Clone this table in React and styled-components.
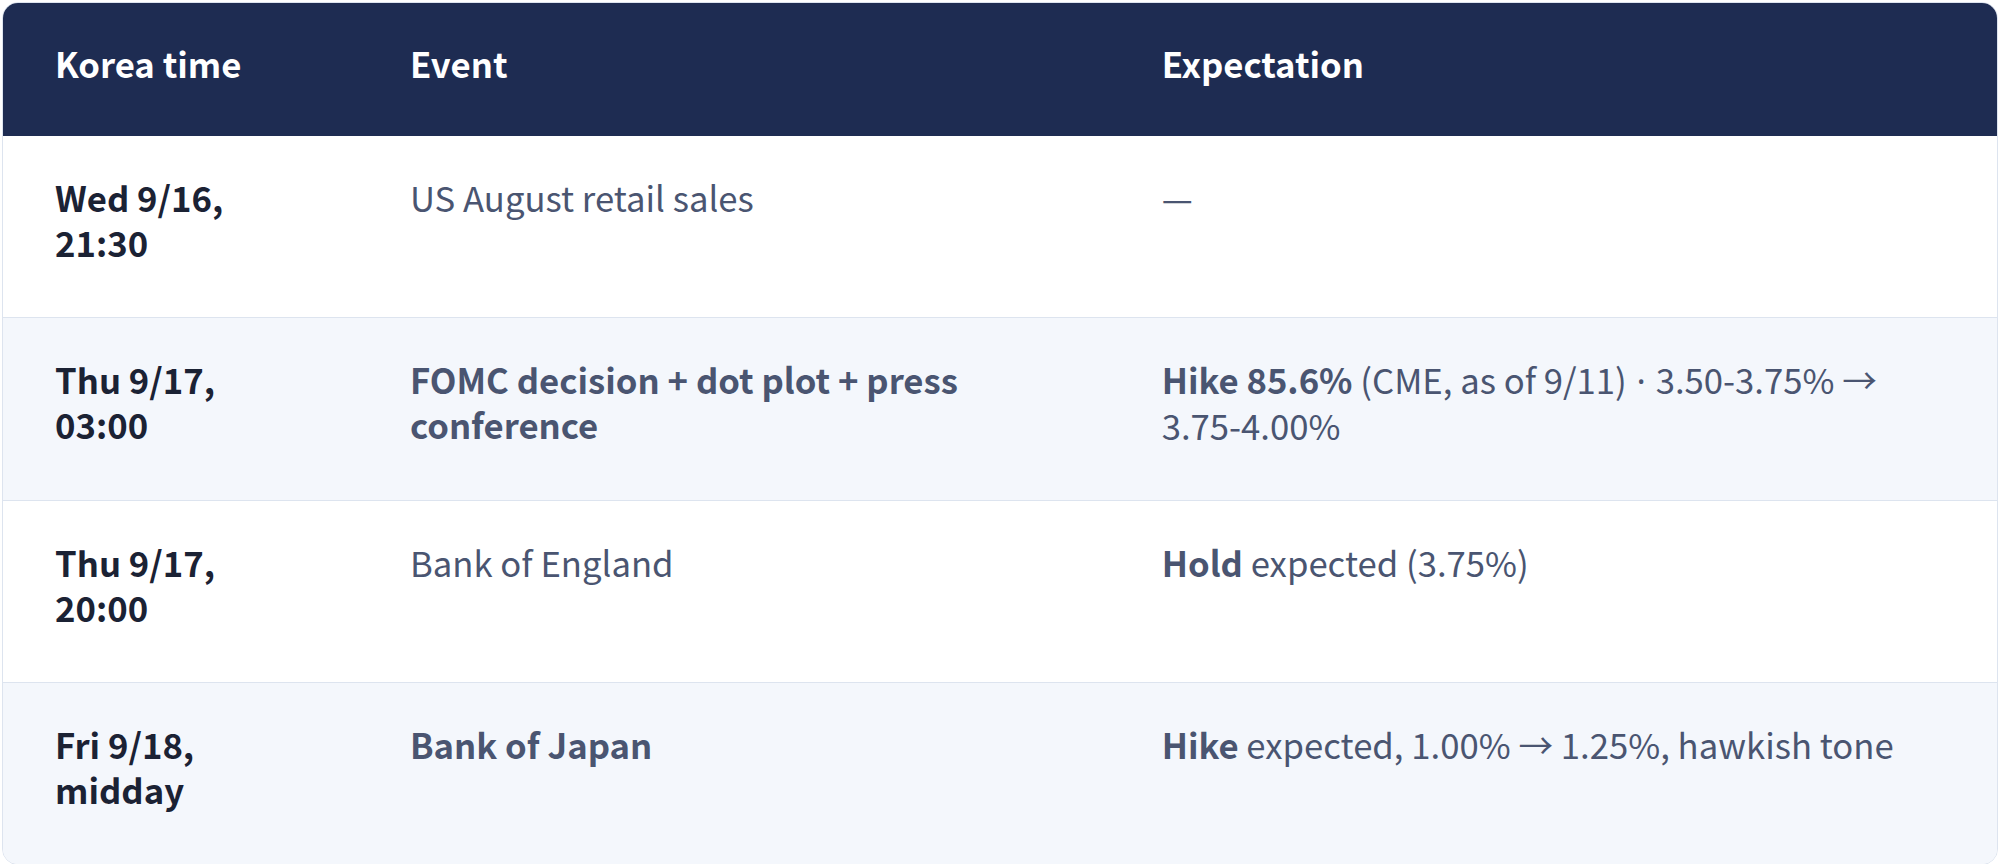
import React from 'react';
import styled, { createGlobalStyle } from 'styled-components';

const GlobalStyle = createGlobalStyle`
  html, body {
    margin: 0;
    padding: 0;
    background: #ffffff;
  }
  body {
    font-family: "Noto Sans CJK KR", "Noto Sans", sans-serif;
  }
`;

const Page = styled.div`
  padding: 2px;
`;

const TableWrap = styled.div`
  border: 1px solid #dde4ef;
  border-radius: 16px;
  overflow: hidden;
`;

const Table = styled.table`
  width: 100%;
  border-collapse: collapse;
  table-layout: fixed;
  font-size: 34.7px;
  line-height: 45px;
`;

const HeadRow = styled.tr`
  background: #1e2c52;
`;

const HeadCell = styled.th`
  box-sizing: border-box;
  text-align: left;
  color: #ffffff;
  font-weight: 700;
  padding: 38px 54px 50px 52px;
  width: ${props => props.$w || 'auto'};
`;

const Row = styled.tr`
  background: ${props => (props.$alt ? '#f4f7fc' : '#ffffff')};

  & + & {
    border-top: 1px solid #dde4ef;
  }
`;

const Cell = styled.td`
  box-sizing: border-box;
  vertical-align: top;
  padding: 39px 54px 52px 52px;
  color: ${props => (props.$time ? '#1b2234' : '#4a5571')};
  font-weight: ${props => (props.$time || props.$strong ? 700 : 400)};
`;

const B = styled.strong`
  font-weight: 700;
`;

// the CJK font draws the middle dot full-width; use a Latin one
const Dot = styled.span`
  font-family: "Noto Sans", sans-serif;
  padding: 0 2px;
`;

const rows = [
  {
    time: 'Wed 9/16, 21:30',
    event: 'US August retail sales',
    expectation: <>—</>,
  },
  {
    time: 'Thu 9/17, 03:00',
    event: 'FOMC decision + dot plot + press conference',
    strong: true,
    expectation: (
      <>
        <B>Hike 85.6%</B> (CME, as of 9/11) <Dot>·</Dot> 3.50-3.75% → 3.75-4.00%
      </>
    ),
  },
  {
    time: 'Thu 9/17, 20:00',
    event: 'Bank of England',
    expectation: (
      <>
        <B>Hold</B> expected (3.75%)
      </>
    ),
  },
  {
    time: 'Fri 9/18, midday',
    event: 'Bank of Japan',
    strong: true,
    expectation: (
      <>
        <B>Hike</B> expected, 1.00% → 1.25%, hawkish tone
      </>
    ),
  },
];

const App = () => {
  return (
    <Page>
      <GlobalStyle />
      <TableWrap>
        <Table>
          <thead>
            <HeadRow>
              <HeadCell $w="17.8%">Korea time</HeadCell>
              <HeadCell $w="37.7%">Event</HeadCell>
              <HeadCell>Expectation</HeadCell>
            </HeadRow>
          </thead>
          <tbody>
            {rows.map((r, i) => (
              <Row key={r.time} $alt={i % 2 === 1}>
                <Cell $time>{r.time}</Cell>
                <Cell $strong={r.strong}>{r.event}</Cell>
                <Cell>{r.expectation}</Cell>
              </Row>
            ))}
          </tbody>
        </Table>
      </TableWrap>
    </Page>
  );
};

export default App;
